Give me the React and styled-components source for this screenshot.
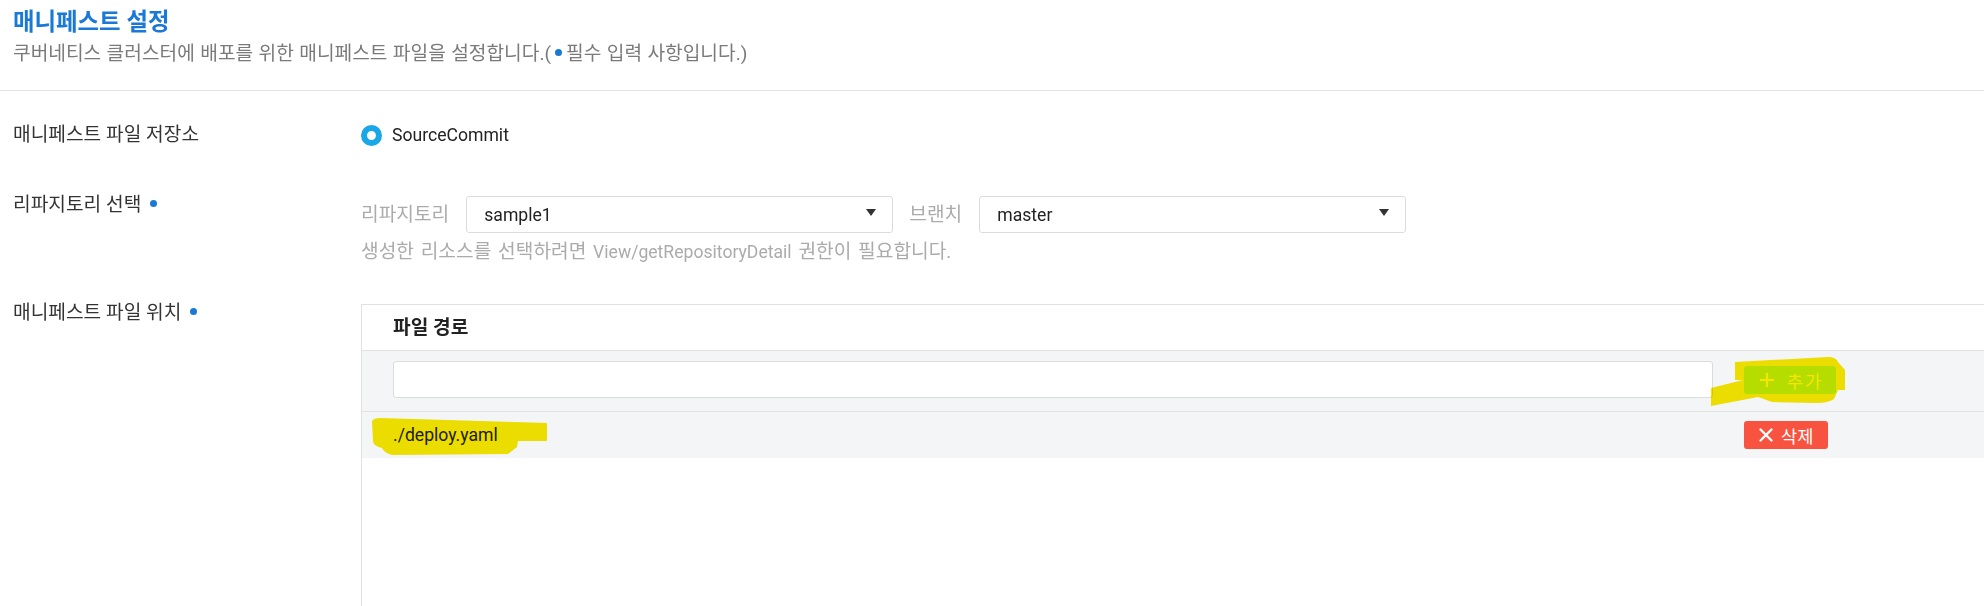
import styled, { createGlobalStyle } from "styled-components";

const GlobalStyle = createGlobalStyle`
  html, body {
    margin: 0;
    padding: 0;
    background: #fff;
    overflow: hidden;
  }
  body {
    font-family: Roboto, "Noto Sans CJK KR", sans-serif;
    font-size: 19.2px;
    color: #333;
  }
  * {
    box-sizing: border-box;
  }
`;

function PlusIcon() {
  return (
    <svg width="16" height="16" viewBox="0 0 16 16">
      <path d="M8 1v14M1 8h14" stroke="currentColor" strokeWidth="2.2" />
    </svg>
  );
}

function CrossIcon() {
  return (
    <svg width="14" height="14" viewBox="0 0 14 14">
      <path
        d="M1.5 1.5l11 11M12.5 1.5l-11 11"
        stroke="currentColor"
        strokeWidth="2.4"
        strokeLinecap="round"
      />
    </svg>
  );
}

export default function App() {
  return (
    <Page>
      <GlobalStyle />
      <Header>
        <Title>매니페스트 설정</Title>
        <Subtitle>
          쿠버네티스 클러스터에 배포를 위한 매니페스트 파일을 설정합니다.(
          <Dot $inline />
          필수 입력 사항입니다.)
        </Subtitle>
      </Header>

      <Form>
        <Row $top={33}>
          <Label>매니페스트 파일 저장소</Label>
          <RadioLine>
            <Radio />
            <span>SourceCommit</span>
          </RadioLine>
        </Row>

        <Row $top={48}>
          <Label>
            리파지토리 선택
            <Dot />
          </Label>
          <Field>
            <SelectLine>
              <SubLabel>리파지토리</SubLabel>
              <Select>
                <span>sample1</span>
                <Caret />
              </Select>
              <SubLabel $gap>브랜치</SubLabel>
              <Select>
                <span>master</span>
                <Caret />
              </Select>
            </SelectLine>
            <Help>
              생성한 리소스를 선택하려면 <Latin>View/getRepositoryDetail</Latin>{" "}
              권한이 필요합니다.
            </Help>
          </Field>
        </Row>

        <Row $top={39}>
          <Label>
            매니페스트 파일 위치
            <Dot />
          </Label>
          <Table>
            <HeadRow>파일 경로</HeadRow>
            <InputRow>
              <PathInput />
              <AddButton>
                <PlusIcon />
                추가
              </AddButton>
              <Marker
                width="160"
                height="60"
                viewBox="0 0 160 60"
                style={{ left: 1338, top: 0 }}
              >
                <path d="M35 11 L128 6 Q136 6 138 11 L145 19 L145 39 L138 39 L134 48 Q128 52 117 52 L72 51 L58 46 L11 55 L11 37 L43 29 L35 29 Z" />
              </Marker>
            </InputRow>
            <FileRow>
              <FileName>./deploy.yaml</FileName>
              <DeleteButton>
                <CrossIcon />
                삭제
              </DeleteButton>
              <Marker
                width="200"
                height="50"
                viewBox="0 0 200 50"
                style={{ left: 0, top: 0 }}
              >
                <path d="M10 9 Q12 6 18 6 L185 11 L185 29 L156 29 L155 35 L146 42 L30 43 Q22 41 20 36 Q12 34 11 30 Z" />
              </Marker>
            </FileRow>
          </Table>
        </Row>
      </Form>
    </Page>
  );
}

const Page = styled.div`
  width: 1984px;
  height: 606px;
  overflow: hidden;
`;

const Header = styled.header`
  height: 91px;
  padding: 6px 13px 0;
  border-bottom: 1px solid #e3e3e3;
`;

const Title = styled.h1`
  margin: 0;
  font-size: 23.4px;
  line-height: 32px;
  font-weight: 700;
  color: #1a78d6;
`;

const Subtitle = styled.p`
  margin: 5px 0 0;
  line-height: 22px;
  word-spacing: 0.6px;
  color: #7a7a7a;
`;

const Dot = styled.span`
  display: inline-block;
  width: 7px;
  height: 7px;
  border-radius: 50%;
  background: #1a78d6;
  vertical-align: ${(p) => (p.$inline ? "middle" : "top")};
  margin: ${(p) => (p.$inline ? "-4px 4px 0 4px" : "6px 0 0 9px")};
`;

const Latin = styled.span`
  font-size: 17.6px;
`;

const Form = styled.div`
  padding-left: 13px;
`;

const Row = styled.div`
  display: grid;
  grid-template-columns: 348px 1fr;
  align-items: start;
  margin-top: ${(p) => p.$top}px;
`;

const Label = styled.div`
  line-height: 22px;
  color: #333;
`;

const RadioLine = styled.div`
  display: flex;
  align-items: center;
  gap: 10px;
  height: 22px;
  font-size: 17.6px;
  color: #222;
`;

const Radio = styled.span`
  width: 21px;
  height: 21px;
  border-radius: 50%;
  border: 6px solid #1aa7e8;
  background: #fff;
`;

const Field = styled.div`
  padding-top: 2px;
`;

const SelectLine = styled.div`
  display: flex;
  align-items: center;
`;

const SubLabel = styled.span`
  color: #ababab;
  line-height: 22px;
  margin: ${(p) => (p.$gap ? "0 17px 0 16px" : "0 17px 0 0")};
`;

const Select = styled.div`
  width: 427px;
  height: 37px;
  border: 1px solid #dcdcdc;
  border-radius: 3px;
  background: #fff;
  display: flex;
  align-items: center;
  justify-content: space-between;
  padding: 0 16px 0 17px;
  font-size: 17.6px;
  color: #222;
`;

const Caret = styled.span`
  width: 0;
  height: 0;
  border-left: 5.5px solid transparent;
  border-right: 5.5px solid transparent;
  border-top: 7px solid #333;
  margin-top: -4px;
`;

const Help = styled.div`
  margin-top: 8px;
  line-height: 22px;
  word-spacing: 2px;
  color: #ababab;
`;

const Table = styled.div`
  margin-top: 2px;
  height: 330px;
  border-top: 1px solid #e1e1e1;
  border-left: 1px solid #e1e1e1;
`;

const HeadRow = styled.div`
  height: 46px;
  line-height: 45px;
  padding-left: 31px;
  font-weight: 700;
  color: #222;
  border-bottom: 1px solid #e1e1e1;
`;

const InputRow = styled.div`
  position: relative;
  display: flex;
  align-items: flex-start;
  gap: 31px;
  height: 61px;
  padding: 10px 0 0 31px;
  background: #f4f5f7;
  border-bottom: 1px solid #e1e1e1;
`;

const PathInput = styled.input`
  width: 1320px;
  height: 37px;
  border: 1px solid #dcdcdc;
  border-radius: 3px;
  background: #fff;
  outline: none;
`;

const ActionButton = styled.button`
  display: flex;
  align-items: center;
  height: 28px;
  border: none;
  border-radius: 3px;
  color: #fff;
  font-family: inherit;
  font-size: 17.6px;
`;

const AddButton = styled(ActionButton)`
  width: 92px;
  gap: 12px;
  padding: 0 0 0 15px;
  margin-top: 5px;
  background: #bbf6c6;
  letter-spacing: 2px;
`;

const DeleteButton = styled(ActionButton)`
  width: 84px;
  gap: 8px;
  padding: 0 0 0 15px;
  background: #f85240;
`;

const FileRow = styled.div`
  position: relative;
  display: flex;
  align-items: center;
  gap: 31px;
  height: 46px;
  padding-left: 31px;
  background: #f4f5f7;
`;

const FileName = styled.div`
  width: 1320px;
  line-height: 22px;
  font-size: 17.6px;
  color: #222;
`;

const Marker = styled.svg`
  position: absolute;
  overflow: visible;
  pointer-events: none;
  mix-blend-mode: multiply;
  fill: #f7e600;
`;
